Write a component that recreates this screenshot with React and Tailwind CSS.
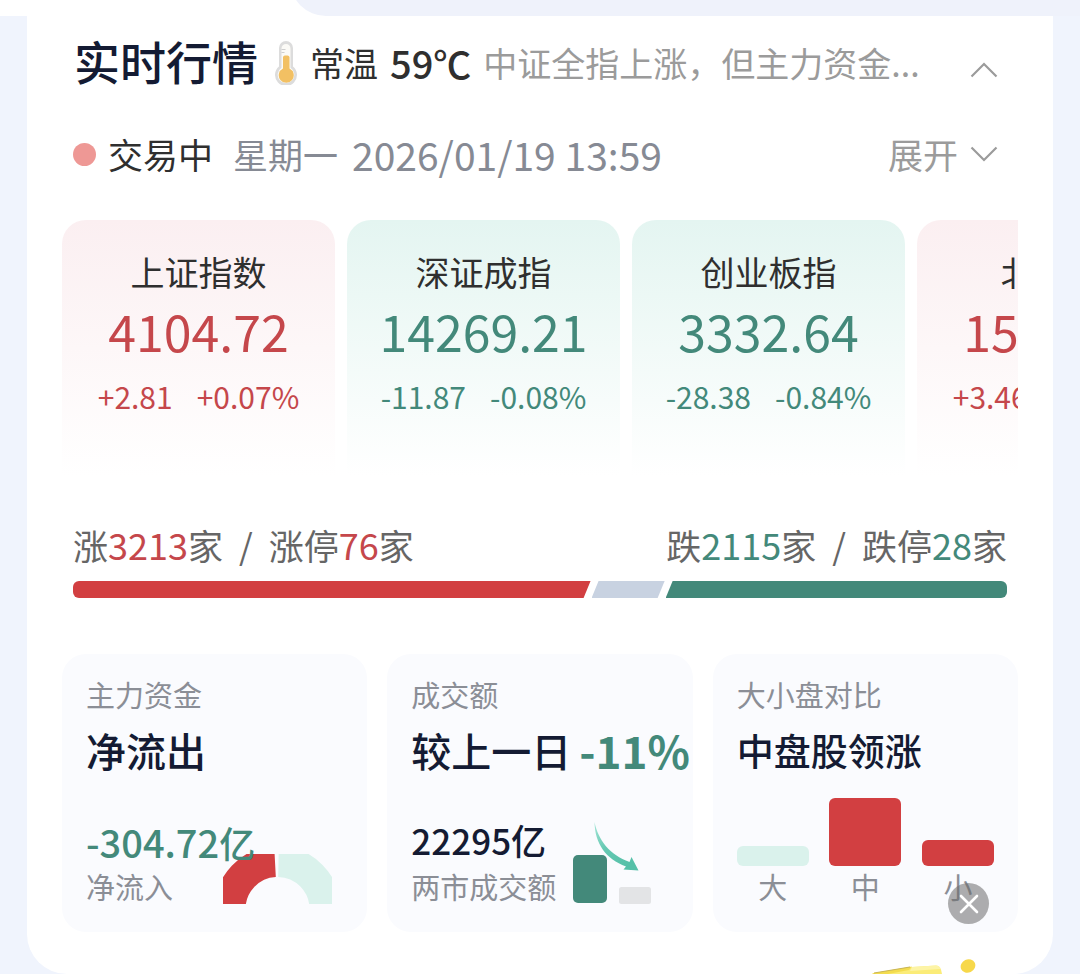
const indices = [
  { name: "上证指数", value: "4104.72", change: "+2.81", percent: "+0.07%", up: true },
  { name: "深证成指", value: "14269.21", change: "-11.87", percent: "-0.08%", up: false },
  { name: "创业板指", value: "3332.64", change: "-28.38", percent: "-0.84%", up: false },
  { name: "北证50", value: "1541.65", change: "+3.46", percent: "+0.22%", up: true },
];

const sizes = [
  { label: "大", height: 20, color: "bg-[#daf2ec]" },
  { label: "中", height: 68, color: "bg-[#d23f41]" },
  { label: "小", height: 26, color: "bg-[#d23f41]" },
];

function Chevron({ up }) {
  return (
    <svg className="h-4 w-7" viewBox="0 0 28 16" fill="none" stroke="#9b9b9b" strokeWidth="2.2" aria-hidden="true">
      <path d={up ? "M1.5 14.5 14 2l12.5 12.5" : "M1.5 1.5 14 14 26.5 1.5"} />
    </svg>
  );
}

function Thermometer() {
  return (
    <svg className="h-11 w-6 shrink-0" viewBox="0 0 24 44" aria-hidden="true">
      <path d="M5 7a7 7 0 0 1 14 0v18.500a11 11 0 1 1-14 0Z" fill="#dcdcdc" />
      <path d="M7.500 7.500a4.500 4.500 0 0 1 9 0v19.300a8.300 8.300 0 1 1-9 0Z" fill="#fbfaf6" />
      <path d="M9 16a2 2 0 0 1 2-1.500h2.500a2 2 0 0 1 2 1.500v11.500a7.500 7.500 0 1 1-6.500 0Z" fill="#f2c063" />
      <path d="M7.500 8.500h4M7.500 11.500h3" stroke="#cfcfcf" strokeWidth="1" />
    </svg>
  );
}

function IndexCard({ item }) {
  const tone = item.up ? "text-[#c5474b]" : "text-[#43897a]";
  const fill = item.up ? "from-[#fbeff1]" : "from-[#e4f5f1]";
  return (
    <li className={`flex h-64 w-[273px] shrink-0 flex-col items-center rounded-t-3xl bg-linear-to-b to-white pt-7 ${fill}`}>
      <span className="text-[34px] leading-12 text-[#2f2f2f]">{item.name}</span>
      <span className={`mt-0.5 text-[50px] leading-16 ${tone}`}>{item.value}</span>
      <span className={`mt-3.5 flex gap-6 text-[30px] leading-10 ${tone}`}>
        <span>{item.change}</span>
        <span>{item.percent}</span>
      </span>
    </li>
  );
}

function StatCard({ label, children }) {
  return (
    <article className="relative flex h-[278px] min-w-0 flex-col rounded-3xl bg-[#fafbfe] px-6 pt-5 whitespace-nowrap">
      <h3 className="text-[29px] leading-10 text-[#8b8e96]">{label}</h3>
      {children}
    </article>
  );
}

function FlowGauge() {
  return (
    <svg className="absolute right-[35px] bottom-7 h-[50px] w-[109px]" viewBox="0 0 109 50" fill="none" strokeWidth="31" aria-hidden="true">
      <path d="M7 55A47.500 47.500 0 0 1 52 7.600" stroke="#d23f41" />
      <path d="M55.500 7.500A47.500 47.500 0 0 1 102 55" stroke="#daf2ec" />
    </svg>
  );
}

function TurnoverChart() {
  return (
    <svg className="absolute right-[41px] bottom-7 h-[82px] w-20" viewBox="0 0 80 82" aria-hidden="true">
      <defs>
        <linearGradient id="fall" x1="0" y1="0" x2="0.6" y2="1">
          <stop offset="0" stopColor="#a6e6d8" />
          <stop offset="0.5" stopColor="#66c9b3" />
          <stop offset="1" stopColor="#55c0a8" />
        </linearGradient>
      </defs>
      <rect x="1" y="33" width="34" height="48" rx="5" fill="#43897a" />
      <rect x="47" y="65" width="32" height="17" rx="2.500" fill="#e3e4e6" />
      <path d="M22.500 0C26 18 38 33 57.500 40L59.500 35 66.500 48.500 51.500 47.500 54 44.500C34 37 23 22 22.500 0Z" fill="url(#fall)" />
    </svg>
  );
}

export default function App() {
  return (
    <div className="relative min-h-screen overflow-hidden bg-[#f0f4fd] font-['Noto_Sans_CJK_SC',sans-serif]">
      <header className="flex h-4 items-end overflow-hidden bg-white">
        <div className="ml-[290px] h-9 flex-1 rounded-bl-[36px] bg-[#eff2fb]" />
      </header>

      <main className="mx-[27px] rounded-b-[40px] bg-white px-[35px] pb-[42px]">
        <section className="flex items-center pt-2.5 pr-5 pl-3 whitespace-nowrap">
          <h1 className="text-[46px] leading-17 font-medium text-[#141b33]">实时行情</h1>
          <div className="mt-1.5 ml-4 flex min-w-0 flex-1 items-center">
            <Thermometer />
            <span className="ml-3 text-[34px] leading-12 text-[#2f2f2f]">常温</span>
            <span className="ml-3 text-[38px] leading-12 font-medium text-[#2f2f2f]">59℃</span>
            <p className="ml-3 text-[34px] leading-12 text-[#9b9b9b]">中证全指上涨，但主力资金...</p>
          </div>
          <button type="button" aria-label="收起" className="mt-5">
            <Chevron up />
          </button>
        </section>

        <section className="mt-9 flex items-center pr-5 pl-[11px] text-[35px] leading-12 whitespace-nowrap">
          <span className="mr-3 size-[23px] rounded-full bg-[#ee9895]" />
          <span className="text-[#2f2f2f]">交易中</span>
          <time className="ml-5 flex gap-3.5 text-[#868a94]" dateTime="2026-01-19T13:59">
            <span>星期一</span>
            <span className="text-[39px]">2026/01/19 13:59</span>
          </time>
          <button type="button" className="ml-auto flex items-center gap-3 text-[#9b9b9b]">
            展开
            <Chevron />
          </button>
        </section>

        <ul className="mt-[42px] flex gap-3 overflow-hidden">
          {indices.map((item) => (
            <IndexCard key={item.name} item={item} />
          ))}
        </ul>

        <section className="mt-11 px-[11px]">
          <div className="flex justify-between text-[35px] leading-12 whitespace-nowrap text-[#666]">
            <p className="flex items-center gap-4">
              <span>涨<span className="text-[36px] text-[#c5474b]">3213</span>家</span>
              <span>/</span>
              <span>涨停<span className="text-[36px] text-[#c5474b]">76</span>家</span>
            </p>
            <p className="flex items-center gap-4">
              <span>跌<span className="text-[36px] text-[#43897a]">2115</span>家</span>
              <span>/</span>
              <span>跌停<span className="text-[36px] text-[#43897a]">28</span>家</span>
            </p>
          </div>
          <div className="mt-3 flex h-[17px] gap-px overflow-hidden rounded-md">
            <div className="grow-[517] bg-[#d23f41] [clip-path:polygon(0_0,100%_0,calc(100%-7px)_100%,0_100%)]" />
            <div className="grow-[73] bg-[#c8d2e1] [clip-path:polygon(7px_0,100%_0,calc(100%-7px)_100%,0_100%)]" />
            <div className="grow-[341] bg-[#43897a] [clip-path:polygon(7px_0,100%_0,100%_100%,0_100%)]" />
          </div>
        </section>

        <section className="mt-14 grid grid-cols-3 gap-5">
          <StatCard label="主力资金">
            <h2 className="mt-2 text-[40px] leading-14 font-medium text-[#141b33]">净流出</h2>
            <FlowGauge />
            <p className="relative mt-10 text-[36px] leading-12 font-medium text-[#43897a]">
              <span className="text-[38px]">-304.72</span>亿
            </p>
            <p className="text-[29px] leading-10 text-[#8b8e96]">净流入</p>
          </StatCard>

          <StatCard label="成交额">
            <h2 className="mt-2 flex items-center gap-2 text-[40px] leading-14 font-medium text-[#141b33]">
              较上一日
              <span className="text-[44px] font-bold text-[#43897a]">-11%</span>
            </h2>
            <TurnoverChart />
            <p className="relative mt-9 text-[35px] leading-13 font-medium text-[#141b33]">22295亿</p>
            <p className="text-[29px] leading-10 text-[#8b8e96]">两市成交额</p>
          </StatCard>

          <StatCard label="大小盘对比">
            <h2 className="mt-2 text-[37px] leading-14 font-medium text-[#141b33]">中盘股领涨</h2>
            <div className="mt-5 flex items-end justify-between">
              {sizes.map((bar) => (
                <div key={bar.label} className="flex flex-col items-center">
                  <div className={`w-18 rounded-md ${bar.color}`} style={{ height: bar.height }} />
                  <span className="text-[29px] leading-10 text-[#8b8e96]">{bar.label}</span>
                </div>
              ))}
            </div>
          </StatCard>
        </section>
      </main>

      <svg className="absolute right-[100px] bottom-0 h-4 w-[112px]" viewBox="0 0 112 16" aria-hidden="true">
        <path d="M6 15 44 9 68 7.500Q73 7.500 74 16H4Z" fill="#fbec78" />
        <path d="M6 15 44 8.500 41 12 20 16H4Z" fill="#f3dc4e" />
        <path d="M6 15 42 9" stroke="#c9b556" strokeWidth="1" />
        <path d="M44 9 68 7.500Q72 7.500 72.500 11L42 13Z" fill="#fdf4a6" />
        <ellipse cx="100" cy="8" rx="7.500" ry="6.500" transform="rotate(-25 100 8)" fill="#f7d84a" />
      </svg>

      <button type="button" aria-label="关闭" className="absolute right-[91px] bottom-[50px] flex size-[41px] items-center justify-center rounded-full bg-[#6b6b6b]/55">
        <svg className="size-5" viewBox="0 0 20 20" stroke="#fff" strokeWidth="2.600" strokeLinecap="round" aria-hidden="true">
          <path d="M2 2 18 18M18 2 2 18" />
        </svg>
      </button>
    </div>
  );
}
